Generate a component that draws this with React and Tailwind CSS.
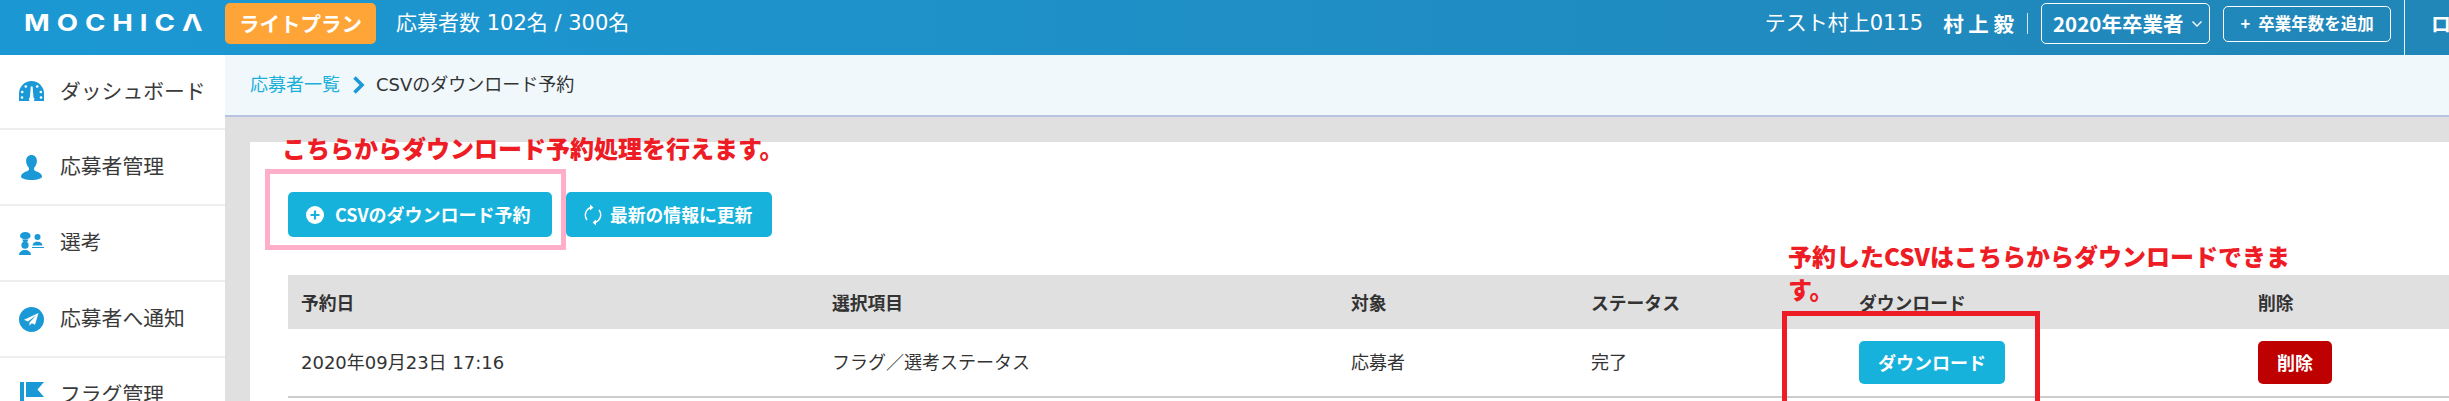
import React from "react";

const font = { fontFamily: '"DejaVu Sans", "Noto Sans CJK JP", sans-serif' };

function GaugeIcon() {
  return (
    <svg width="25" height="21" viewBox="0 0 25 21" className="block">
      <path d="M0 20V12.500a12.500 12.500 0 0 1 25 0V20Z" fill="#1a99d6" />
      <path d="M13.600 5.500h-1.800l-.9 10.800a2.600 2.600 0 1 0 3.600 0Z" fill="#fff" />
      <circle cx="6.800" cy="5.500" r="1.300" fill="#fff" />
      <circle cx="18.200" cy="5.500" r="1.300" fill="#fff" />
      <circle cx="3.200" cy="11" r="1.300" fill="#fff" />
      <circle cx="21.800" cy="11" r="1.300" fill="#fff" />
      <circle cx="3" cy="16.500" r="1.300" fill="#fff" />
      <circle cx="22" cy="16.500" r="1.300" fill="#fff" />
    </svg>
  );
}

function UserIcon() {
  return (
    <svg width="21" height="25" viewBox="0 0 21 25" className="block">
      <path d="M10.500 0c3.300 0 5.400 2.500 5.400 6 0 2.800-1.200 5.200-2.800 6.700v2c0 1 3 1.700 5.200 3 1.700 1 2.700 2.300 2.700 3.800 0 2.300-5 3.500-10.500 3.500S0 23.800 0 21.500c0-1.500 1-2.800 2.700-3.800 2.200-1.300 5.200-2 5.200-3v-2C6.300 11.200 5.100 8.800 5.100 6c0-3.500 2.100-6 5.400-6Z" fill="#1a99d6" />
    </svg>
  );
}

function SelectionIcon() {
  return (
    <svg width="25" height="23" viewBox="0 0 25 23" className="block">
      <ellipse cx="6.300" cy="3.700" rx="5.300" ry="3.700" fill="#1a99d6" />
      <path d="M3 7.500h6.500L8 10H4.500Z" fill="#1a99d6" />
      <circle cx="6" cy="13.200" r="3.600" fill="#1a99d6" />
      <path d="M0 23c0-3 2.500-4.300 4.500-5h3c2 .7 4.500 2 4.500 5Z" fill="#1a99d6" />
      <circle cx="18.500" cy="5" r="3" fill="#1a99d6" />
      <path d="M13.500 13.500c0-2 1.800-3.200 3.500-3.800h3c1.700.6 3.500 1.800 3.500 3.800Z" fill="#1a99d6" />
      <rect x="13" y="15" width="12" height="1" fill="#1a99d6" />
    </svg>
  );
}

function PlaneIcon() {
  return (
    <svg width="25" height="25" viewBox="0 0 25 25" className="block">
      <circle cx="12.500" cy="12.500" r="12.500" fill="#1a99d6" />
      <path d="M19.500 6 5 12.800l3.900 1.600L17 8.500l-6.500 7v3.300l2.300-2.500 3.200 1.500Z" fill="#fff" />
    </svg>
  );
}

function FlagIcon() {
  return (
    <svg width="24" height="27" viewBox="0 0 24 27" className="block">
      <rect x="0" y="0" width="4" height="27" fill="#1a99d6" />
      <path d="M6 0h18l-6.500 7.500L24 15H6Z" fill="#1a99d6" />
    </svg>
  );
}

function PlusCircle() {
  return (
    <svg width="18" height="18" viewBox="0 0 18 18" className="block shrink-0">
      <circle cx="9" cy="9" r="9" fill="#fff" />
      <path d="M9 4.500v9M4.500 9h9" stroke="#17b2db" strokeWidth="2.200" />
    </svg>
  );
}

function RefreshIcon() {
  return (
    <svg width="18" height="22" viewBox="0 0 18 22" fill="none" className="block shrink-0">
      <path d="M3 16A8 8 0 0 1 7 3.500" stroke="#fff" strokeWidth="1.400" />
      <path d="M15 6a8 8 0 0 1-4 12.500" stroke="#fff" strokeWidth="1.400" />
      <path d="M9.500 3.500 6 0.500v6Z" fill="#fff" />
      <path d="M8.500 18.500 12 15.500v6Z" fill="#fff" />
    </svg>
  );
}

function Chevron() {
  return (
    <svg width="13" height="18" viewBox="0 0 13 18" fill="none" className="block shrink-0">
      <path d="M2.500 1.500 10 9l-7.500 7.500" stroke="#1a99d6" strokeWidth="3.600" />
    </svg>
  );
}

const navItems = [
  { label: "ダッシュボード", icon: <GaugeIcon />, h: "h-[75px]" },
  { label: "応募者管理", icon: <UserIcon />, h: "h-[76px]" },
  { label: "選考", icon: <SelectionIcon />, h: "h-[76px]" },
  { label: "応募者へ通知", icon: <PlaneIcon />, h: "h-[76px]" },
  { label: "フラグ管理", icon: <FlagIcon />, h: "h-[76px]" },
];

const cjkBold = "font-['Noto_Sans_CJK_JP',sans-serif] font-bold";

export default function App() {
  return (
    <div className="relative flex h-[401px] w-[2449px] flex-col overflow-hidden bg-[#e0e0e0] text-[#333333]" style={font}>
      <header className="flex h-[55px] shrink-0 items-center bg-linear-to-r from-[#1b98d3] to-[#2186b8] text-white">
        <div className="w-[225px] shrink-0 -translate-y-[4px] pl-[24px]">
          <span className="inline-block origin-left scale-x-[1.2] font-['Inter',sans-serif] text-[23px] font-bold tracking-[5.8px] whitespace-nowrap">
            MOCHICΛ
          </span>
        </div>
        <div className={`flex h-[41px] w-[151px] shrink-0 -translate-y-[4px] items-center justify-center rounded-[5px] bg-[#ffa436] text-[20.5px] ${cjkBold}`}>
          ライトプラン
        </div>
        <div className="ml-[20px] -translate-y-[4px] text-[21px] whitespace-nowrap">応募者数 102名 / 300名</div>
        <div className="ml-auto flex h-full items-center">
          <div className="-translate-y-[4px] text-[21px] whitespace-nowrap">テスト村上0115</div>
          <div className={`ml-[20px] -translate-y-[4px] text-[20.5px] whitespace-nowrap ${cjkBold}`}>村 上 毅</div>
          <div className="mx-[13px] h-[21px] w-px -translate-y-[4px] bg-[#cfe6f2]" />
          <div className={`flex h-[41px] w-[169px] -translate-y-[4px] items-center justify-between rounded-[5px] border border-white pr-[6px] pl-[11px] text-[20.5px] whitespace-nowrap ${cjkBold}`}>
            2020年卒業者
            <svg width="12" height="8" viewBox="0 0 12 8" fill="none"><path d="m1.500 1.500 4.500 4.500 4.500-4.500" stroke="#fff" strokeWidth="1.400" /></svg>
          </div>
          <div className={`ml-[13px] flex h-[36px] w-[168px] -translate-y-[4px] items-center justify-center gap-[8px] rounded-[5px] border border-white text-[16.5px] whitespace-nowrap ${cjkBold}`}>
            <span>+</span>卒業年数を追加
          </div>
          <div className="ml-[13px] h-full w-px bg-[#e3f1f8]" />
          <div className={`w-[44px] -translate-y-[4px] overflow-hidden pl-[26px] text-[20px] whitespace-nowrap ${cjkBold}`}>ログアウト</div>
        </div>
      </header>

      <div className="flex min-h-0 flex-1">
        <aside className="w-[225px] shrink-0 bg-white">
          {navItems.map((item) => (
            <div key={item.label} className={`flex ${item.h} items-center gap-[16px] border-b-2 border-[#eeeeee] pl-[19px]`}>
              <span className="flex w-[25px] justify-center">{item.icon}</span>
              <span className="translate-y-[1px] text-[20.8px] whitespace-nowrap text-[#3a3a3a]">{item.label}</span>
            </div>
          ))}
        </aside>

        <main className="min-w-0 flex-1">
          <div className="flex h-[62px] items-center border-b-2 border-[#b9c4e4] bg-[#f0f8fc] pl-[25px] text-[18px]">
            <span className="-translate-y-[1px] text-[#1ab0d8]">応募者一覧</span>
            <span className="mr-[11px] ml-[12px]"><Chevron /></span>
            <span className="-translate-y-[1px]">CSVのダウンロード予約</span>
          </div>

          <div className="mt-[25px] ml-[25px] h-[300px] bg-white pt-[50px] pl-[38px]">
            <div className="flex gap-[14px]">
              <button className={`flex h-[45px] w-[264px] items-center gap-[11px] rounded-[5px] bg-[#17b2db] pl-[18px] text-[18px] text-white ${cjkBold}`}>
                <PlusCircle />CSVのダウンロード予約
              </button>
              <button className={`flex h-[45px] w-[206px] items-center gap-[8px] rounded-[5px] bg-[#17b2db] pl-[18px] text-[17.8px] text-white ${cjkBold}`}>
                <RefreshIcon />最新の情報に更新
              </button>
            </div>

            <table className="mt-[38px] w-[2200px] table-fixed border-collapse text-left text-[18px]">
              <colgroup>
                <col className="w-[531px]" />
                <col className="w-[519px]" />
                <col className="w-[240px]" />
                <col className="w-[268px]" />
                <col className="w-[399px]" />
                <col />
              </colgroup>
              <thead>
                <tr className="h-[54px] bg-[#e0e0e0]">
                  {["予約日", "選択項目", "対象", "ステータス", "ダウンロード", "削除"].map((h) => (
                    <th key={h} className={`pl-[13px] text-[17.8px] ${cjkBold}`}>{h}</th>
                  ))}
                </tr>
              </thead>
              <tbody>
                <tr className="h-[68px] border-b-2 border-[#cccccc]">
                  <td className="pl-[13px]">2020年09月23日 17:16</td>
                  <td className="pl-[13px]">フラグ／選考ステータス</td>
                  <td className="pl-[13px]">応募者</td>
                  <td className="pl-[13px]">完了</td>
                  <td className="pl-[13px]">
                    <button className={`h-[43px] w-[146px] rounded-[5px] bg-[#17b2db] text-[18px] text-white ${cjkBold}`}>ダウンロード</button>
                  </td>
                  <td className="pl-[13px]">
                    <button className={`h-[43px] w-[74px] rounded-[5px] bg-[#be0000] text-[18px] text-white ${cjkBold}`}>削除</button>
                  </td>
                </tr>
              </tbody>
            </table>
          </div>
        </main>
      </div>

      {/* Annotations laid over the page */}
      <div className="absolute top-[130px] left-[282px] font-['Noto_Sans_CJK_JP',sans-serif] text-[24px] leading-[36px] font-black whitespace-nowrap text-[#ee1c25]">
        こちらからダウンロード予約処理を行えます。
      </div>
      <div className="absolute top-[169px] left-[265px] h-[81px] w-[301px] border-[5px] border-[#ffaec9]" />
      <div className="absolute top-[239px] left-[1788px] font-['Noto_Sans_CJK_JP',sans-serif] text-[24px] leading-[33px] font-black whitespace-nowrap text-[#ee1c25]">
        予約したCSVはこちらからダウンロードできま<br />す。
      </div>
      <div className="absolute top-[311px] left-[1782px] h-[120px] w-[258px] border-[5px] border-[#ee1c25]" />
    </div>
  );
}
